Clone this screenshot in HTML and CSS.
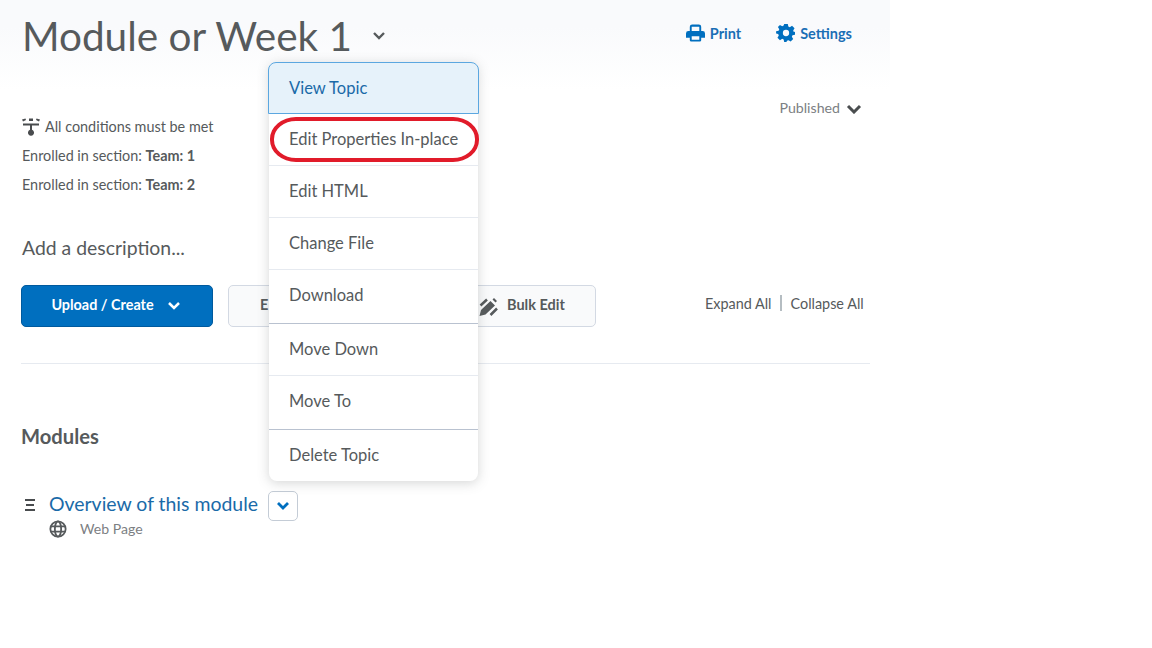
FILE: index.html
```html
<!DOCTYPE html>
<html lang="en">
<head>
    <meta charset="UTF-8">
    <title>Module or Week 1</title>
    <link rel="stylesheet" href="styles.css">
</head>
<body>
    <div class="page">
        <header class="page-head">
            <h1>Module or Week 1</h1>
            <svg class="title-chevron" viewBox="0 0 14 10"><path d="M2 2l5 5 5-5"/></svg>
            <div class="head-actions">
                <a class="head-link">
                    <svg viewBox="0 0 20 18" class="head-icon print-icon"><path d="M4 7V2.5A2.5 2.5 0 0 1 6.5 0h7A2.5 2.5 0 0 1 16 2.5V7h1.5A2.5 2.5 0 0 1 20 9.500V14h-4v2.500a1.500 1.500 0 0 1-1.500 1.500h-9A1.500 1.500 0 0 1 4 16.500V14H0V9.500A2.500 2.500 0 0 1 2.500 7zM6 2.500V7h8V2.500zM6 12.500V16h8v-3.500z" fill-rule="evenodd"/></svg>
                    Print
                </a>
                <a class="head-link">
                    <svg viewBox="0 0 20 20" class="head-icon"><path fill-rule="evenodd" d="M8 0h4l.6 2.800 1.600.7 2.500-1.500 2.800 2.800-1.500 2.500.7 1.600L20 8.500v3.500l-2.800.6-.7 1.600 1.500 2.500-2.800 2.800-2.500-1.500-1.600.7L10.500 20H8l-.6-2.800-1.600-.7-2.500 1.500-2.800-2.800 1.500-2.500-.7-1.600L-1 10.500V8l2.800-.6.700-1.600L1 3.300 3.300 1l2.500 1.500 1.600-.7zM10 6.500a3.500 3.500 0 1 0 0 7 3.500 3.500 0 0 0 0-7z"/></svg>
                    Settings
                </a>
            </div>
        </header>

        <div class="status-row">
            <span>Published</span>
            <svg class="status-chevron" viewBox="0 0 16 10"><path d="M2 2l6 6 6-6"/></svg>
        </div>

        <div class="conditions">
            <p class="condition-head">
                <svg class="cond-icon" viewBox="0 0 18 18"><path d="M0 1.500l3.500-1 .5 1.500-3 1.500zM7 .5h4V3H7zM18 1.500l-3.500-1-.5 1.500 3 1.500zM1 5.500h16v2h-7v4.300a3 3 0 1 1-2 0V7.500H1z"/></svg>
                All conditions must be met
            </p>
            <p>Enrolled in section: <b>Team: 1</b></p>
            <p>Enrolled in section: <b>Team: 2</b></p>
        </div>

        <p class="description">Add a description...</p>

        <div class="toolbar">
            <button class="btn-primary">
                <span>Upload / Create</span>
                <svg viewBox="0 0 14 10"><path d="M2 2l5 5 5-5"/></svg>
            </button>
            <div class="btn-group">
                <span class="btn-hidden">E</span>
                <span class="btn-bulk">
                    <svg viewBox="0 0 20 20"><path d="M1.500 19l1.500-6 9.500-9 4.500 4.500-9.500 9zM14.500 2.500L16 1l3 3-1.500 1.500z"/><path class="pencil-line" d="M2.500 8.500L9 2.500M12.500 18l6.500-6.500"/></svg>
                    Bulk Edit
                </span>
            </div>
            <div class="expand-links">
                <span>Expand All</span>
                <span class="divider"></span>
                <span>Collapse All</span>
            </div>
        </div>

        <hr class="rule">

        <h2 class="modules-title">Modules</h2>

        <div class="topic">
            <svg class="drag-icon" viewBox="0 0 10 12"><path d="M0 0h10v2H0zM1 5h8v2H1zM0 10h10v2H0z"/></svg>
            <div>
                <div class="topic-line">
                    <a class="topic-link">Overview of this module</a>
                    <span class="topic-menu">
                        <svg viewBox="0 0 14 10"><path d="M2 2l5 5 5-5"/></svg>
                    </span>
                </div>
                <div class="topic-type">
                    <svg viewBox="0 0 20 20"><circle cx="10" cy="10" r="8.500"/><ellipse cx="10" cy="10" rx="3.500" ry="8.500"/><path d="M2 7h16M2 13h16"/></svg>
                    Web Page
                </div>
            </div>
        </div>
    </div>

    <ul class="context-menu">
        <li class="active">View Topic</li>
        <li>Edit Properties In-place</li>
        <li>Edit HTML</li>
        <li>Change File</li>
        <li class="section-end">Download</li>
        <li>Move Down</li>
        <li class="section-end">Move To</li>
        <li>Delete Topic</li>
    </ul>
    <div class="highlight-ring"></div>
</body>
</html>
```

FILE: styles.css
```css
* {
    box-sizing: border-box;
}
body {
    margin: 0;
    font-family: Lato, sans-serif;
    color: #565a5c;
    background: #fff;
}
p {
    margin: 0;
}
.page {
    width: 890px;
}
.page-head {
    display: flex;
    align-items: flex-start;
    height: 90px;
    padding: 12px 38px 0 22px;
    background: linear-gradient(#f9fafc 30%, #fff);
}
h1 {
    margin: 0;
    font-size: 40.500px;
    font-weight: 400;
    line-height: 48px;
}
.title-chevron {
    width: 14px;
    height: 10px;
    margin: 19px 0 0 20px;
    fill: none;
    stroke: #565a5c;
    stroke-width: 2.400;
}
.head-actions {
    display: flex;
    gap: 36px;
    margin-left: auto;
    padding-top: 12px;
}
.head-link {
    display: flex;
    align-items: center;
    gap: 5px;
    font-size: 14.500px;
    font-weight: 700;
    color: #1a6eb5;
}
.head-icon {
    width: 18px;
    height: 18px;
    fill: #006fbf;
    overflow: visible;
}
.head-link .print-icon {
    width: 19px;
}
.status-row {
    display: flex;
    align-items: center;
    justify-content: flex-end;
    gap: 6px;
    height: 20px;
    margin-top: 7px;
    padding-right: 28px;
    font-size: 14.200px;
    color: #7c8083;
}
.status-chevron {
    width: 16px;
    height: 10px;
    margin-top: 3px;
    fill: none;
    stroke: #4a4d4f;
    stroke-width: 3;
}
.conditions {
    padding-left: 22px;
    font-size: 14.400px;
    line-height: 20px;
}
.conditions p {
    margin-bottom: 9px;
}
.condition-head {
    display: flex;
    align-items: center;
    gap: 5px;
}
.cond-icon {
    width: 18px;
    height: 18px;
    fill: #494c4e;
}
.description {
    margin-top: 40px;
    padding-left: 22px;
    font-size: 19.400px;
    line-height: 26px;
}
.toolbar {
    display: flex;
    align-items: flex-start;
    margin-top: 24px;
    padding-left: 21px;
}
.btn-primary {
    display: flex;
    align-items: center;
    justify-content: center;
    gap: 13px;
    width: 192px;
    height: 42px;
    padding: 0 2px 0 0;
    border: 1px solid #005a9e;
    border-radius: 5px;
    background: #006fbf;
    color: #fff;
    font: 700 14.400px Lato, sans-serif;
}
.btn-primary span {
    padding-bottom: 3px;
}
.btn-primary svg {
    width: 14px;
    height: 10px;
    fill: none;
    stroke: #fff;
    stroke-width: 2.500;
}
.btn-group {
    display: flex;
    align-items: center;
    width: 368px;
    height: 42px;
    margin-left: 15px;
    padding: 0 0 3px 31px;
    border: 1px solid #d3d9e3;
    border-radius: 5px;
    background: #f9fafb;
    font-size: 14.500px;
    font-weight: 700;
}
.btn-hidden {
    width: 218px;
}
.btn-bulk {
    display: flex;
    align-items: center;
    gap: 9px;
}
.btn-bulk svg {
    width: 20px;
    height: 20px;
    margin-top: 5px;
    fill: #565a5c;
}
.pencil-line {
    fill: none;
    stroke: #565a5c;
    stroke-width: 2.500;
}
.expand-links {
    display: flex;
    align-items: center;
    gap: 8px;
    height: 36px;
    margin-left: 109px;
    font-size: 14.400px;
}
.divider {
    width: 2px;
    height: 16px;
    margin-right: 1px;
    background: #b5bdc2;
}
.rule {
    width: 849px;
    height: 1px;
    margin: 36px 0 0 21px;
    border: 0;
    background: #e6eaf0;
}
.modules-title {
    margin: 59px 0 0 21px;
    font-size: 20.200px;
    font-weight: 700;
    line-height: 26px;
    color: #565a5c;
}
.topic {
    display: flex;
    gap: 14px;
    margin-top: 42px;
    padding-left: 25px;
}
.drag-icon {
    width: 10px;
    height: 12px;
    margin-top: 8px;
    fill: #494c4e;
}
.topic-line {
    display: flex;
    align-items: center;
    gap: 9.500px;
    height: 30px;
}
.topic-link {
    padding-bottom: 6px;
    font-size: 19.450px;
    color: #1a6aa8;
}
.topic-menu {
    display: flex;
    align-items: center;
    justify-content: center;
    width: 30px;
    height: 30px;
    border: 1px solid #c4ccd6;
    border-radius: 5px;
}
.topic-menu svg {
    width: 14px;
    height: 10px;
    fill: none;
    stroke: #006fbf;
    stroke-width: 2.800;
}
.topic-type {
    display: flex;
    align-items: center;
    gap: 13px;
    margin-top: -2px;
    font-size: 14.100px;
    line-height: 20px;
    color: #7c8083;
}
.topic-type svg {
    width: 18px;
    height: 18px;
    fill: none;
    stroke: #565a5c;
    stroke-width: 2;
}
/* menu floats over the toolbar */
.context-menu {
    position: absolute;
    left: 269px;
    top: 62px;
    width: 209px;
    margin: 0;
    padding: 0;
    list-style: none;
    background: #fff;
    border-radius: 8px;
    box-shadow: 0 2px 12px rgba(86, 90, 92, 0.25);
    font-size: 16.500px;
}
.context-menu li {
    height: 52px;
    padding-left: 20px;
    line-height: 51px;
    white-space: nowrap;
    border-bottom: 1px solid #e6eaf0;
}
.context-menu li.active {
    margin: 0 -1px;
    line-height: 50px;
    color: #1a6aa8;
    background: #e6f2fa;
    border: 1px solid #5ba7e0;
    border-radius: 8px 8px 0 0;
}
.context-menu li.section-end {
    height: 54px;
    border-bottom: 1px solid #b9c2d0;
}
.context-menu li:last-child {
    height: 51px;
    border-bottom: 0;
    border-radius: 0 0 8px 8px;
}
.highlight-ring {
    position: absolute;
    left: 270px;
    top: 117px;
    width: 209px;
    height: 45px;
    border: 4.500px solid #e11b2a;
    border-radius: 26px / 22px;
}
```
